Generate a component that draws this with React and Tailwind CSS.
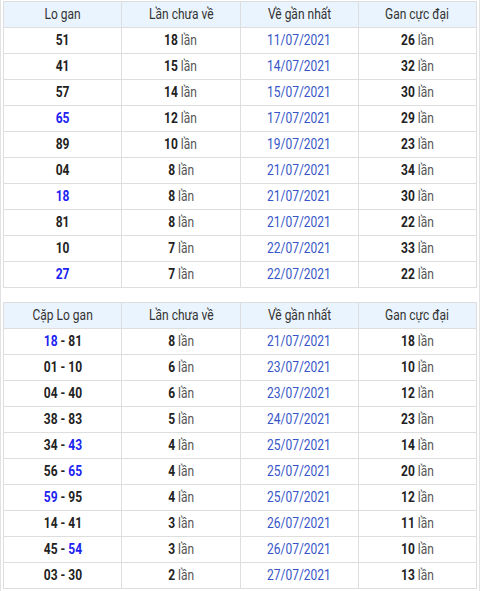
import React from "react";

const loGan = [
  [["51"], "18", "11/07/2021", "26"],
  [["41"], "15", "14/07/2021", "32"],
  [["57"], "14", "15/07/2021", "30"],
  [[{ v: "65", blue: true }], "12", "17/07/2021", "29"],
  [["89"], "10", "19/07/2021", "23"],
  [["04"], "8", "21/07/2021", "34"],
  [[{ v: "18", blue: true }], "8", "21/07/2021", "30"],
  [["81"], "8", "21/07/2021", "22"],
  [["10"], "7", "22/07/2021", "33"],
  [[{ v: "27", blue: true }], "7", "22/07/2021", "22"],
];

const capLoGan = [
  [[{ v: "18", blue: true }, "81"], "8", "21/07/2021", "18"],
  [["01", "10"], "6", "23/07/2021", "10"],
  [["04", "40"], "6", "23/07/2021", "12"],
  [["38", "83"], "5", "24/07/2021", "23"],
  [["34", { v: "43", blue: true }], "4", "25/07/2021", "14"],
  [["56", { v: "65", blue: true }], "4", "25/07/2021", "20"],
  [[{ v: "59", blue: true }, "95"], "4", "25/07/2021", "12"],
  [["14", "41"], "3", "26/07/2021", "11"],
  [["45", { v: "54", blue: true }], "3", "26/07/2021", "10"],
  [["03", "30"], "2", "27/07/2021", "13"],
];

function Txt({ children, className = "" }) {
  return (
    <span className={`inline-block scale-x-[0.8] whitespace-nowrap ${className}`}>
      {children}
    </span>
  );
}

function Num({ parts }) {
  return (
    <Txt className="font-bold text-[#222]">
      {parts.map((p, i) => {
        const item = typeof p === "string" ? { v: p } : p;
        return (
          <React.Fragment key={i}>
            {i > 0 && " - "}
            <span className={item.blue ? "text-[#1c22f2]" : ""}>{item.v}</span>
          </React.Fragment>
        );
      })}
    </Txt>
  );
}

function Lan({ n }) {
  return (
    <Txt>
      <b className="font-bold text-[#222]">{n}</b>{" "}
      <span className="text-[#555]">lần</span>
    </Txt>
  );
}

function GanTable({ first, rows, className = "" }) {
  const th = "h-[26px] border border-[#dedede] bg-[#eaf4fe] p-0 text-center font-normal text-[#333]";
  const td = "h-[26px] border border-[#dedede] p-0 text-center";
  return (
    <table className={`w-full table-fixed border-collapse bg-white ${className}`}>
      <thead>
        <tr>
          {[first, "Lần chưa về", "Về gần nhất", "Gan cực đại"].map((h) => (
            <th key={h} className={th}>
              <Txt>{h}</Txt>
            </th>
          ))}
        </tr>
      </thead>
      <tbody>
        {rows.map(([nums, chua, date, max], i) => (
          <tr key={i}>
            <td className={td}>
              <Num parts={nums} />
            </td>
            <td className={td}>
              <Lan n={chua} />
            </td>
            <td className={td}>
              <Txt className="text-[#3656c8]">{date}</Txt>
            </td>
            <td className={td}>
              <Lan n={max} />
            </td>
          </tr>
        ))}
      </tbody>
    </table>
  );
}

export default function App() {
  return (
    <div className="min-h-[591px] border-x border-[#e2e2e2] bg-white px-[2px] pt-px font-['Roboto',sans-serif] text-[15px] leading-none">
      <GanTable first="Lo gan" rows={loGan} />
      <GanTable first="Cặp Lo gan" rows={capLoGan} className="mt-[14px]" />
    </div>
  );
}
